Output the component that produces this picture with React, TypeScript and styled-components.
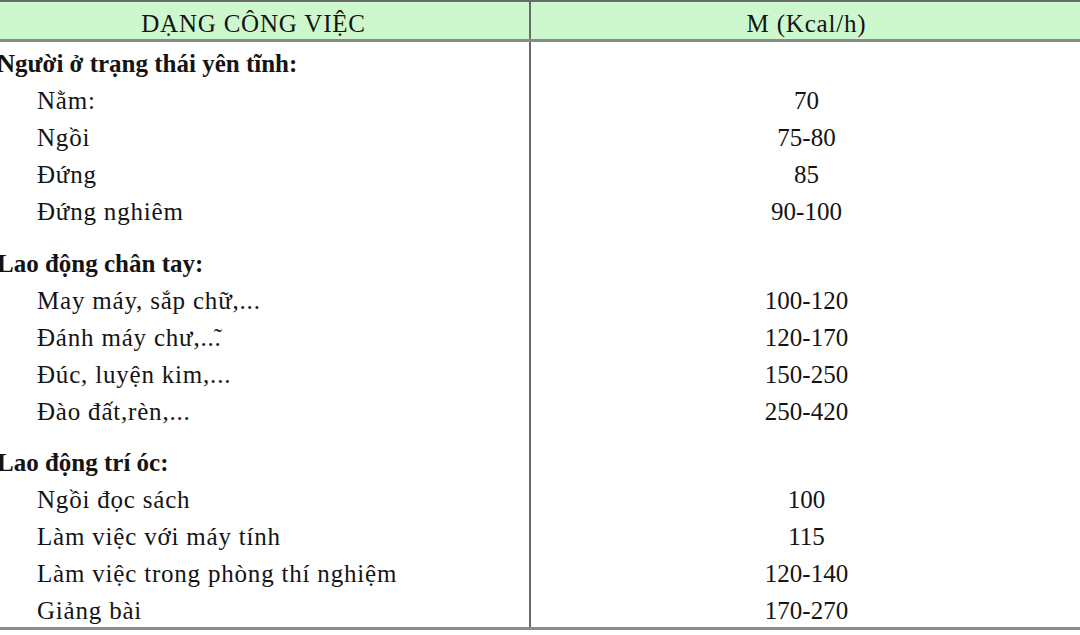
import React from 'react';
import styled, { createGlobalStyle } from 'styled-components';

const GlobalStyle = createGlobalStyle`
    html, body {
        margin: 0;
        padding: 0;
        background: #ffffff;
        overflow: hidden;
    }
`;

const StyledPage = styled.div`
    width: 1080px;
    height: 635px;
    overflow: hidden;
    background: #ffffff;
`;

const StyledTable = styled.table`
    border-collapse: collapse;
    table-layout: fixed;
    width: 1104px;
    margin-left: -22px;
    border-top: 2px solid #6a6a6a;
    border-bottom: 3px solid #8c8c8c;
    color: #141414;
    font-family: "Liberation Serif", "Times New Roman", serif;
    font-size: 25px;
`;

const StyledHeadCell = styled.th`
    background: #cdf8cd;
    border-bottom: 3px solid #8a8a8a;
    height: 38px;
    padding: 7px 0 0 0;
    box-sizing: border-box;
    font-weight: normal;
    letter-spacing: 0.8px;
    line-height: 30px;
    text-align: center;
    vertical-align: top;

    &:first-child {
        width: 552px;
        border-right: 2px solid #6a6a6a;
    }
`;

const StyledCell = styled.td<{ $kind: 'group' | 'item' | 'value' }>`
    height: 33px;
    line-height: 33px;
    padding: 4px 0 0 0;
    padding-left: ${props => props.$kind === 'group' ? '19px' : props.$kind === 'item' ? '59px' : '0'};
    font-weight: ${props => props.$kind === 'group' ? 'bold' : 'normal'};
    letter-spacing: ${props => props.$kind === 'item' ? '0.8px' : '0'};
    text-align: ${props => props.$kind === 'value' ? 'center' : 'left'};
    white-space: nowrap;
    vertical-align: top;

    &:first-child {
        border-right: 2px solid #6a6a6a;
    }
`;

const StyledGap = styled.td<{ $height: number }>`
    height: ${props => props.$height}px;
    padding: 0;

    &:first-child {
        border-right: 2px solid #6a6a6a;
    }
`;

type Group = {
    title: string,
    gapBefore: number,
    items: [string, string][]
};

const GROUPS: Group[] = [
    {
        title: 'Người ở trạng thái yên tĩnh:',
        gapBefore: 1,
        items: [
            ['Nằm:', '70'],
            ['Ngồi', '75-80'],
            ['Đứng', '85'],
            ['Đứng nghiêm', '90-100'],
        ],
    },
    {
        title: 'Lao động chân tay:',
        gapBefore: 15,
        items: [
            ['May máy, sắp chữ,...', '100-120'],
            ['Đánh máy chư,..\u0303.', '120-170'],
            ['Đúc, luyện kim,...', '150-250'],
            ['Đào đất,rèn,...', '250-420'],
        ],
    },
    {
        title: 'Lao động trí óc:',
        gapBefore: 14,
        items: [
            ['Ngồi đọc sách', '100'],
            ['Làm việc với máy tính', '115'],
            ['Làm việc trong phòng thí nghiệm', '120-140'],
            ['Giảng bài', '170-270'],
        ],
    },
];

function GapRow({ height }: { height: number }) {
    return <tr>
        <StyledGap $height={height} />
        <StyledGap $height={height} />
    </tr>
}

export default function App() {
    return <StyledPage>
        <GlobalStyle />
        <StyledTable>
            <thead>
                <tr>
                    <StyledHeadCell>DẠNG CÔNG VIỆC</StyledHeadCell>
                    <StyledHeadCell>M (Kcal/h)</StyledHeadCell>
                </tr>
            </thead>
            <tbody>
                {GROUPS.map(group => (
                    <React.Fragment key={group.title}>
                        <GapRow height={group.gapBefore} />
                        <tr>
                            <StyledCell $kind="group">{group.title}</StyledCell>
                            <StyledCell $kind="value" />
                        </tr>
                        {group.items.map(([label, value]) => (
                            <tr key={label}>
                                <StyledCell $kind="item">{label}</StyledCell>
                                <StyledCell $kind="value">{value}</StyledCell>
                            </tr>
                        ))}
                    </React.Fragment>
                ))}
            </tbody>
        </StyledTable>
    </StyledPage>
}
